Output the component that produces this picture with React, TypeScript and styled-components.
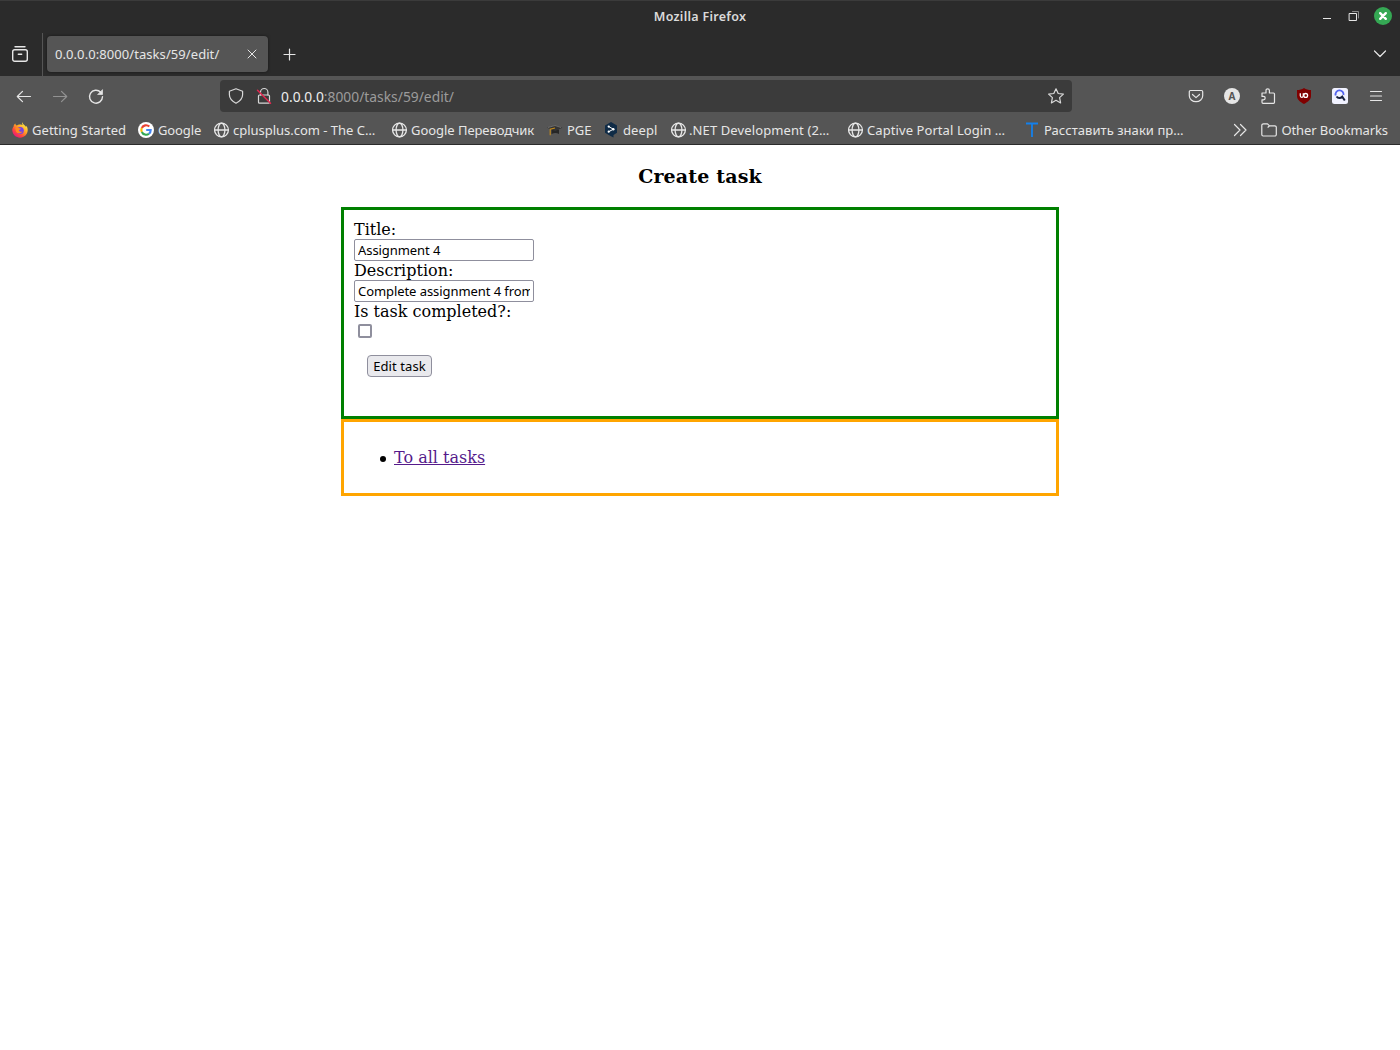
import React from "react";
import styled, { createGlobalStyle } from "styled-components";

const GlobalStyle = createGlobalStyle`
  body { margin: 0; background: #fff; }
  * { box-sizing: border-box; }
`;

const Window = styled.div`
  width: 1400px;
  height: 1050px;
  overflow: hidden;
  display: flex;
  flex-direction: column;
  background: #fff;
`;

const Chrome = styled.header`
  font: 13px/20px "Noto Sans", sans-serif;
  color: #e6e6e6;
  background: #555;
  border-bottom: 1px solid #2b2b2b;
  svg { display: block; flex: none; }
`;

const TitleBar = styled.div`
  height: 32px;
  display: grid;
  grid-template-columns: 1fr auto 1fr;
  align-items: center;
  background: #2b2b2b;
  border-top: 1px solid #3b3b3b;
`;

const WindowTitle = styled.span`
  grid-column: 2;
  font-size: 12.5px;
  font-weight: 600;
  color: #dadada;
  letter-spacing: 0.28px;
`;

const WindowControls = styled.div`
  justify-self: end;
  display: flex;
  align-items: center;
  padding: 0 8px 2px 0;
  gap: 14px;
`;

const TabStrip = styled.div`
  height: 44px;
  display: flex;
  align-items: center;
  background: #2b2b2b;
  padding: 0 12px 0 11px;
`;

const TabDivider = styled.span`
  width: 1px;
  height: 43px;
  background: #555;
  margin: 0 4px 0 13px;
`;

const Tab = styled.div`
  width: 221px;
  height: 36px;
  display: flex;
  align-items: center;
  justify-content: space-between;
  padding: 0 10px 0 8px;
  border-radius: 4px;
  background: #555;
  box-shadow: 0 0 3px rgba(0, 0, 0, 0.5);
  margin-right: 13px;
`;

const Spacer = styled.span`
  flex: 1;
`;

const NavBar = styled.div`
  height: 40px;
  display: flex;
  align-items: center;
  padding: 0 15px;
`;

const NavButtons = styled.div`
  display: flex;
  gap: 18px;
  width: 205px;
`;

const UrlBar = styled.div`
  width: 852px;
  height: 32px;
  display: flex;
  align-items: center;
  padding: 0 7px;
  border-radius: 4px;
  background: #3b3b3b;
  margin-right: 115px;
`;

const UrlIcons = styled.div`
  display: flex;
  gap: 10px;
  margin-right: 8px;
`;

const Url = styled.span<{ $spacing: number }>`
  flex: 1;
  padding-top: 2px;
  font-size: 13.8px;
  color: #9b9b9b;
  letter-spacing: ${(p) => p.$spacing}px;
`;

const Host = styled.span`
  color: #ededed;
`;

const Extensions = styled.div`
  display: flex;
  gap: 18px;
`;

const BookmarkBar = styled.div`
  height: 28px;
  display: flex;
  align-items: center;
  padding: 0 12px;
`;

const Bookmark = styled.div<{ $width?: number; $gap?: number }>`
  width: ${(p) => (p.$width ? `${p.$width}px` : "auto")};
  display: flex;
  align-items: center;
  gap: ${(p) => p.$gap ?? 4}px;
`;

const Label = styled.span<{ $spacing?: number }>`
  white-space: nowrap;
  letter-spacing: ${(p) => p.$spacing ?? 0}px;
`;

const Page = styled.main`
  width: 718px;
  margin: 0 auto;
  font: 16px/19px "DejaVu Serif", serif;
  color: #000;
`;

const Heading = styled.h3`
  margin: 20px 0;
  font-size: 19px;
  line-height: 22px;
  letter-spacing: 0.15px;
  text-align: center;
`;

const Panel = styled.section<{ $color: string; $height: number }>`
  height: ${(p) => p.$height}px;
  padding: 10px;
  border: 3px solid ${(p) => p.$color};
`;

const Field = styled.label`
  display: flex;
  flex-direction: column;
  align-items: flex-start;
`;

const TextInput = styled.input`
  width: 180px;
  height: 22px;
  padding: 1px 3px;
  border: 1px solid #8f8f9d;
  border-radius: 2px;
  font: 13px "Noto Sans", sans-serif;
  letter-spacing: -0.07px;
  color: #000;
  background: #fff;
`;

const Checkbox = styled.input`
  appearance: none;
  width: 14px;
  height: 14px;
  margin: 3px 4px;
  border: 2px solid #8f8f9d;
  border-radius: 2px;
  background: #fff;
`;

const SubmitButton = styled.button`
  display: block;
  width: 65px;
  height: 22px;
  margin: 14px 13px;
  padding: 0;
  border: 1px solid #8f8f9d;
  border-radius: 4px;
  background: #e9e9ed;
  font: 13px/18px "Noto Sans", sans-serif;
  letter-spacing: 0.1px;
  color: #000;
`;

const Links = styled.ul`
  margin: 16px 0;
  padding-left: 36px;
  list-style: none;
`;

const LinkItem = styled.li`
  display: flex;
  align-items: center;
  gap: 7px;
  margin-left: -10px;

  &::before {
    content: "";
    width: 6px;
    height: 6px;
    margin-top: 2px;
    border-radius: 50%;
    background: #000;
  }
`;

const Link = styled.a`
  margin-left: 1px;
  color: #551a8b;
  text-decoration: underline;
`;

type IconProps = {
  size?: number;
  color?: string;
  width?: number;
  children: React.ReactNode;
};

const Icon = ({ size = 16, color = "#e6e6e6", width = 1.2, children }: IconProps) => (
  <svg
    width={size}
    height={size}
    viewBox={`0 0 ${size} ${size}`}
    fill="none"
    stroke={color}
    strokeWidth={width}
    strokeLinecap="round"
    strokeLinejoin="round"
  >
    {children}
  </svg>
);

const Globe = () => (
  <Icon width={1.3}>
    <circle cx="7.5" cy="8" r="6.9" />
    <ellipse cx="7.5" cy="8" rx="3.4" ry="6.9" />
    <path d="M.6 8h13.800" />
  </Icon>
);

const FirefoxLogo = () => (
  <svg width="16" height="16" viewBox="0 0 16 16">
    <defs>
      <linearGradient id="flame" x1="0.85" y1="0.1" x2="0.2" y2="0.95">
        <stop offset="0" stopColor="#fff04a" />
        <stop offset="0.4" stopColor="#ffa025" />
        <stop offset="0.7" stopColor="#ff4a3d" />
        <stop offset="1" stopColor="#e9137f" />
      </linearGradient>
    </defs>
    <path
      d="M10.2.3c-.5 1 0 2 .7 2.8-.8-.5-2-.7-3-.5-1.300-.1-2.300.3-3 .800C4 3.300 3.400 2.500 3.300 1.500 2 2.300 1.600 3.600 1.600 4.500.6 5.700.1 7 .3 8.600.7 12.800 4 15.700 8 15.700c4.400 0 7.700-3.300 7.700-7.600 0-2-.6-3.400-1.600-4.300.1.500.1.800 0 1.100C13 3 10.800 2.700 10.200.3z"
      fill="url(#flame)"
    />
    <circle cx="8.300" cy="8.400" r="3.500" fill="#7542e5" />
    <path d="M3.300 6c1.500-1 3-.6 4 .3l1.600.2c0 1-1.500 1-1.900 1.700.1 1.500 2 2 3.500 1-1 2.800-5.400 2.800-6.500.2z" fill="#ff8a20" />
  </svg>
);

const GoogleLogo = () => (
  <svg width="16" height="16" viewBox="0 0 16 16">
    <circle cx="8" cy="8" r="8" fill="#fff" />
    <g fill="none" strokeWidth="2.100">
      <path d="M11.300 4.600A4.700 4.700 0 0 0 3.800 6" stroke="#ea4335" />
      <path d="M3.800 6a4.700 4.700 0 0 0 0 4" stroke="#fbbc05" />
      <path d="M3.800 10a4.700 4.700 0 0 0 7.200 1.700" stroke="#34a853" />
      <path d="M11 11.700A4.700 4.700 0 0 0 12.700 8H8.200" stroke="#4285f4" />
    </g>
  </svg>
);

const GraduationCap = () => (
  <svg width="16" height="16" viewBox="0 0 16 16">
    <path d="M4.500 7.500v4.500q4-1.800 7.500 0v-4.500z" fill="#262626" />
    <path d="M0 5.800l8-2.600 7.500 2.500-7.300 3.200z" fill="#343434" />
    <path d="M1 5.500l7-2 6 2" fill="none" stroke="#777" strokeWidth="0.800" />
    <path d="M8 6L3.200 7.200v6" fill="none" stroke="#c58b1b" strokeWidth="1.100" />
  </svg>
);

const DeeplLogo = () => (
  <svg width="16" height="16" viewBox="0 0 16 16">
    <path d="M8 0l6 3.500v7.300L10.500 13v2.500L7.500 14 2 10.800V3.500z" fill="#0f2b46" />
    <path d="M5.800 4.600l4.500 2.600-4.500 2.500" fill="none" stroke="#fff" />
    <g fill="#fff">
      <circle cx="5.700" cy="4.600" r="1.100" />
      <circle cx="10.300" cy="7.200" r="1.200" />
      <circle cx="5.700" cy="9.700" r="1.100" />
    </g>
  </svg>
);

const LetterT = () => (
  <svg width="16" height="16" viewBox="0 0 16 16">
    <path d="M2 1.500h12M8 1.500V15" stroke="#1380ec" strokeWidth="1.800" />
  </svg>
);

const bookmarks = [
  { text: "Getting Started", icon: <FirefoxLogo />, width: 126, spacing: 0.04 },
  { text: "Google", icon: <GoogleLogo />, width: 76, spacing: -0.12 },
  { text: "cplusplus.com - The C…", icon: <Globe />, width: 178, spacing: -0.02, gap: 3 },
  { text: "Google Переводчик", icon: <Globe />, width: 155, spacing: -0.05, gap: 3 },
  { text: "PGE", icon: <GraduationCap />, width: 56, spacing: 0 },
  { text: "deepl", icon: <DeeplLogo />, width: 68, spacing: 0.1 },
  { text: ".NET Development (2…", icon: <Globe />, width: 177, spacing: 0.11, gap: 2 },
  { text: "Captive Portal Login …", icon: <Globe />, width: 176, spacing: 0.08, gap: 3 },
  { text: "Расставить знаки пр…", icon: <LetterT />, width: 166, spacing: 0.05 },
];

const glyph = { fontFamily: "Noto Sans, sans-serif", fontWeight: 700 };

const BrowserChrome = () => (
  <Chrome>
    <TitleBar>
      <WindowTitle>Mozilla Firefox</WindowTitle>
      <WindowControls>
        <Icon size={14} width={1}>
          <path d="M5.500 9.500h7" strokeLinecap="square" />
        </Icon>
        <Icon size={14} width={1}>
          <path d="M6.500 2.500h6V9" stroke="#888" />
          <path d="M3.500 4.500h7v7h-7z" strokeLinejoin="miter" />
        </Icon>
        <Icon size={18} color="#fff" width={2.4}>
          <circle cx="9" cy="9" r="9" fill="#35a854" stroke="none" />
          <path d="M6.200 6.200l5.600 5.600M11.800 6.200l-5.600 5.600" />
        </Icon>
      </WindowControls>
    </TitleBar>
    <TabStrip>
      <Icon size={18} width={1.4}>
        <path d="M4 1.800h10" />
        <rect x="1.700" y="4.700" width="14.600" height="11.600" rx="2" />
        <path d="M7.300 9.200h3.400" />
      </Icon>
      <TabDivider />
      <Tab>
        <Label $spacing={0.07}>0.0.0.0:8000/tasks/59/edit/</Label>
        <Icon size={12} width={1}>
          <path d="M2 2l8 8M10 2l-8 8" />
        </Icon>
      </Tab>
      <Icon>
        <path d="M8.500 3v11M3 8.500h11" />
      </Icon>
      <Spacer />
      <Icon>
        <path d="M2.500 5l5.500 5.500L13.500 5" />
      </Icon>
    </TabStrip>
    <NavBar>
      <NavButtons>
        <Icon size={18}>
          <path d="M15.500 9.500H2.500M7.500 4.300L2.300 9.500l5.200 5.200" />
        </Icon>
        <Icon size={18} color="#929292">
          <path d="M2.500 9.500h13M10.500 4.300l5.200 5.200-5.200 5.200" />
        </Icon>
        <Icon size={18} width={1.4}>
          <path d="M13.700 5.200A6.500 6.500 0 1 0 15.500 9.800" />
          <path d="M15.500 3v4.500H11z" fill="#e6e6e6" strokeWidth="0.700" />
        </Icon>
      </NavButtons>
      <UrlBar>
        <UrlIcons>
          <Icon size={18} color="#d8d8d8">
            <path d="M9 1.700l6.600 2.500v3.600c0 3.500-2.500 6.300-6.600 8.400-4.100-2.100-6.600-4.900-6.600-8.400V4.200z" />
          </Icon>
          <Icon size={18} color="#d8d8d8">
            <rect x="3.500" y="8" width="11" height="8.200" rx="1" />
            <path d="M5.500 8V5.200a3.700 3.700 0 0 1 7.400 0V8" />
            <path d="M2.500 3.300l13 13" stroke="#e22850" strokeWidth="1.500" />
          </Icon>
        </UrlIcons>
        <Url $spacing={0.02}>
          <Host>0.0.0.0</Host>:8000/tasks/59/edit/
        </Url>
        <Icon size={18} color="#d8d8d8">
          <path d="M9 1.800l2.200 4.700 5.200.6-3.800 3.500 1 5.300L9 13.300l-4.600 2.600 1-5.300-3.800-3.500 5.200-.6z" />
        </Icon>
      </UrlBar>
      <Extensions>
        <Icon size={18}>
          <path d="M3.500 3.500h11a1.200 1.200 0 0 1 1.200 1.200v4a6.700 6 0 0 1-13.400 0v-4a1.200 1.200 0 0 1 1.200-1.200zM5.500 7.500L9 10.600l3.500-3.100" />
        </Icon>
        <svg width="18" height="18" viewBox="0 0 18 18">
          <circle cx="9" cy="9" r="8" fill="#e6e6e6" />
          <text x="9" y="12.500" fontSize="10" textAnchor="middle" fill="#555" {...glyph}>A</text>
        </svg>
        <Icon size={18}>
          <path d="M3 6h4V3.500a1.700 1.700 0 0 1 3.400 0V6H14.500a1 1 0 0 1 1 1v8.300a1 1 0 0 1-1 1H4a1 1 0 0 1-1-1v-2.500h1.500a1.700 1.700 0 0 0 0-3.400H3z" />
        </Icon>
        <svg width="18" height="18" viewBox="0 0 18 18">
          <path d="M9 1c2 1.500 4.500 2 7 2v6c0 3.500-3 5.700-7 8-4-2.300-7-4.500-7-8V3c2.500 0 5-.5 7-2z" fill="#800000" />
          <g fill="none" stroke="#fff" strokeWidth="1.300">
            <path d="M5.300 6.300v2.500a1.500 1.500 0 0 0 3 0V6.300" />
            <circle cx="10.700" cy="8.400" r="1.900" />
          </g>
        </svg>
        <svg width="18" height="18" viewBox="0 0 18 18">
          <rect x="1" y="1" width="16" height="16" rx="2.500" fill="#f1f2ff" />
          <path d="M4.700 8.500a4 4 0 1 1 7.800-.5" fill="none" stroke="#5364ef" strokeWidth="1.800" />
          <path d="M5.500 9.500c1.500 2 4 2 5.700.2l2.600 3.800" fill="none" stroke="#18213e" strokeWidth="2" />
        </svg>
        <Icon size={18}>
          <path d="M3.500 4.500h11M3.500 9h11M3.500 13.500h11" />
        </Icon>
      </Extensions>
    </NavBar>
    <BookmarkBar>
      {bookmarks.map((b) => (
        <Bookmark key={b.text} $width={b.width} $gap={b.gap}>
          {b.icon}
          <Label $spacing={b.spacing}>{b.text}</Label>
        </Bookmark>
      ))}
      <Spacer />
      <Bookmark $gap={13}>
        <Icon>
          <path d="M2.500 2.500L8 8l-5.500 5.500M8.500 2.500L14 8l-5.500 5.500" />
        </Icon>
        <Bookmark>
          <Icon>
            <path d="M2.500 1.800h4l2 2h5.300A1.500 1.500 0 0 1 15.300 5.300v7.200a1.500 1.500 0 0 1-1.500 1.500H2.200A1.500 1.500 0 0 1 .8 12.500v-9a1.700 1.700 0 0 1 1.700-1.700zM8.500 3.800L7 5.200" />
          </Icon>
          <Label $spacing={-0.1}>Other Bookmarks</Label>
        </Bookmark>
      </Bookmark>
    </BookmarkBar>
  </Chrome>
);

export default function App() {
  return (
    <Window>
      <GlobalStyle />
      <BrowserChrome />
      <Page>
        <Heading>Create task</Heading>
        <Panel $color="green" $height={212}>
          <Field>
            Title:
            <TextInput defaultValue="Assignment 4" />
          </Field>
          <Field>
            Description:
            <TextInput defaultValue="Complete assignment 4 from course" />
          </Field>
          <Field>
            Is task completed?:
            <Checkbox type="checkbox" />
          </Field>
          <SubmitButton>Edit task</SubmitButton>
        </Panel>
        <Panel $color="orange" $height={77}>
          <Links>
            <LinkItem>
              <Link href="#">To all tasks</Link>
            </LinkItem>
          </Links>
        </Panel>
      </Page>
    </Window>
  );
}
